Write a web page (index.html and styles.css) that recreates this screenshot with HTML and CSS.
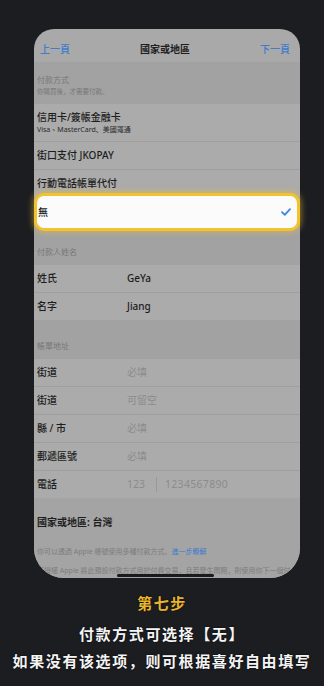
FILE: index.html
```html
<!DOCTYPE html>
<html lang="zh">
<head>
<meta charset="utf-8">
<link rel="stylesheet" href="styles.css">
</head>
<body>
<div class="page">
  <div class="phone">
    <div class="screen">
      <div class="nav">
        <span class="nav-link">上一頁</span>
        <span class="nav-title">國家或地區</span>
        <span class="nav-link">下一頁</span>
      </div>

      <div class="sechead first">
        <div class="sec-title">付款方式</div>
        <div class="sec-sub">你購買後，才需要付款。</div>
      </div>
      <div class="row tall">
        <div class="row-title">信用卡/簽帳金融卡</div>
        <div class="row-sub">Visa、MasterCard、美國運通</div>
      </div>
      <div class="row">街口支付 JKOPAY</div>
      <div class="row">行動電話帳單代付</div>
      <div class="row selected">
        <span>無</span>
        <svg class="check" width="10" height="8" viewBox="0 0 10 8"><path d="M1 4.2 L3.8 6.8 L9 1.2" fill="none" stroke="#3a88e6" stroke-width="1.8" stroke-linecap="round" stroke-linejoin="round"/></svg>
      </div>

      <div class="sechead">
        <div class="sec-title">付款人姓名</div>
      </div>
      <div class="row field"><span class="label">姓氏</span><span class="value">GeYa</span></div>
      <div class="row field last"><span class="label">名字</span><span class="value">Jiang</span></div>

      <div class="sechead third">
        <div class="sec-title">帳單地址</div>
      </div>
      <div class="row field"><span class="label">街道</span><span class="value ph">必填</span></div>
      <div class="row field"><span class="label">街道</span><span class="value ph">可留空</span></div>
      <div class="row field"><span class="label">縣 / 市</span><span class="value ph">必填</span></div>
      <div class="row field"><span class="label">郵遞區號</span><span class="value ph">必填</span></div>
      <div class="row field last"><span class="label">電話</span><span class="value ph code">123</span><span class="divider"></span><span class="ph num">1234567890</span></div>

      <div class="foot">
        <div class="country">國家或地區: 台灣</div>
        <div class="note">你可以透過 Apple 帳號使用多種付款方式。<span class="more">進一步瞭解</span></div>
        <div class="note second">若授權 Apple 將此預設付款方式用於付費交易，且若發生問題，則使用你下一個付</div>
        <div class="home"></div>
      </div>
    </div>
  </div>

  <div class="caption">
    <div class="step">第七步</div>
    <div class="line">付款方式可选择【无】</div>
    <div class="line">如果没有该选项，则可根据喜好自由填写</div>
  </div>
</div>
</body>
</html>
```

FILE: styles.css
```css
* { box-sizing: border-box; }

html, body {
  margin: 0;
  padding: 0;
}

body {
  width: 324px;
  height: 686px;
  overflow: hidden;
  background: #1c1d21;
  font-family: "Noto Sans", "Noto Sans CJK TC", sans-serif;
  color: #1d1d1d;
}

.page {
  padding-top: 17px;
}

.phone {
  margin-left: 34px;
  width: 266px;
  background: #050505;
  border-radius: 24px 24px 30px 30px;
}

.screen {
  margin-top: 12px;
  position: relative;
  top: 0;
  height: 549px;
  background: #a9a9a9;
  border-radius: 20px 20px 30px 30px;
  display: flex;
  flex-direction: column;
}

.nav {
  height: 33px;
  padding: 7px 10px 0 6px;
  display: flex;
  align-items: center;
  font-size: 10px;
  line-height: 26px;
}

.nav-link {
  color: #3f7ccb;
  font-weight: 500;
  width: 32px;
}

.nav-link:last-child {
  text-align: right;
}

.nav-title {
  flex: 1;
  text-align: center;
  font-weight: 700;
  color: #1e1e1e;
}

.sechead {
  background: #a2a2a2;
  padding: 22px 0 8px 3px;
}

.sechead.first {
  padding: 13px 0 7px 3px;
}

.sechead.third {
  padding: 21px 0 8px 3px;
}

.sec-title {
  font-size: 8px;
  line-height: 10px;
  color: #777;
}

.sec-sub {
  margin-top: 2px;
  font-size: 6.5px;
  line-height: 10px;
  color: #777;
}

.row {
  height: 28px;
  padding-left: 3px;
  display: flex;
  align-items: center;
  background: #ababab;
  border-bottom: 1px solid #9f9f9f;
  font-size: 10px;
  font-weight: 500;
  line-height: 13px;
}

.row.last {
  border-bottom: none;
  height: 27px;
}

.row.tall {
  height: 38px;
  padding-top: 7px;
  display: block;
}

.row-title {
  font-size: 10px;
  line-height: 13px;
}

.row-sub {
  margin-top: 1px;
  font-size: 7px;
  line-height: 10px;
  font-weight: 400;
  color: #2a2a2a;
}

.row.selected {
  position: relative;
  z-index: 1;
  height: 38px;
  margin: -5px 0 -6px;
  padding: 0 6px 0 1px;
  background: #fbfbfb;
  border: 3px solid #f3c22f;
  border-radius: 10px;
  box-shadow: 0 0 6px 1px rgba(243, 194, 47, 0.55);
  justify-content: space-between;
}

.check {
  display: block;
}

.label {
  width: 90px;
  flex: none;
}

.value {
  color: #1d1d1d;
}

.ph {
  color: #8c8c8c;
  font-weight: 400;
}

.code {
  width: 29px;
  flex: none;
  font-size: 10.5px;
}

.divider {
  width: 1px;
  height: 15px;
  background: #999;
  margin-right: 8px;
}

.num {
  font-size: 10.5px;
  letter-spacing: 0.3px;
}

.foot {
  flex: 1;
  background: #a4a4a4;
  border-radius: 0 0 30px 30px;
  overflow: hidden;
  padding: 19px 0 0 3px;
  position: relative;
}

.country {
  font-size: 10px;
  line-height: 10px;
  font-weight: 700;
  color: #1e1e1e;
}

.note {
  margin-top: 20px;
  font-size: 7px;
  line-height: 10px;
  color: #7d7d7d;
  white-space: nowrap;
}

.note.second {
  margin-top: 9px;
}

.more {
  color: #3f7ccb;
}

.home {
  position: absolute;
  left: 83px;
  bottom: 1px;
  width: 97px;
  height: 3px;
  border-radius: 2px;
  background: #1a1a1a;
}

.caption {
  margin-top: 15px;
  text-align: center;
  font-family: "Noto Sans CJK SC", sans-serif;
  font-weight: 700;
  font-size: 15px;
  line-height: 20px;
  color: #f4f4f4;
  text-shadow: 0 0 2px rgba(0, 0, 0, 0.8);
}

.step {
  color: #e9b52b;
  letter-spacing: 1.5px;
}

.line {
  margin-top: 11px;
  letter-spacing: 1.6px;
}

.line + .line {
  margin-top: 7px;
}
```
